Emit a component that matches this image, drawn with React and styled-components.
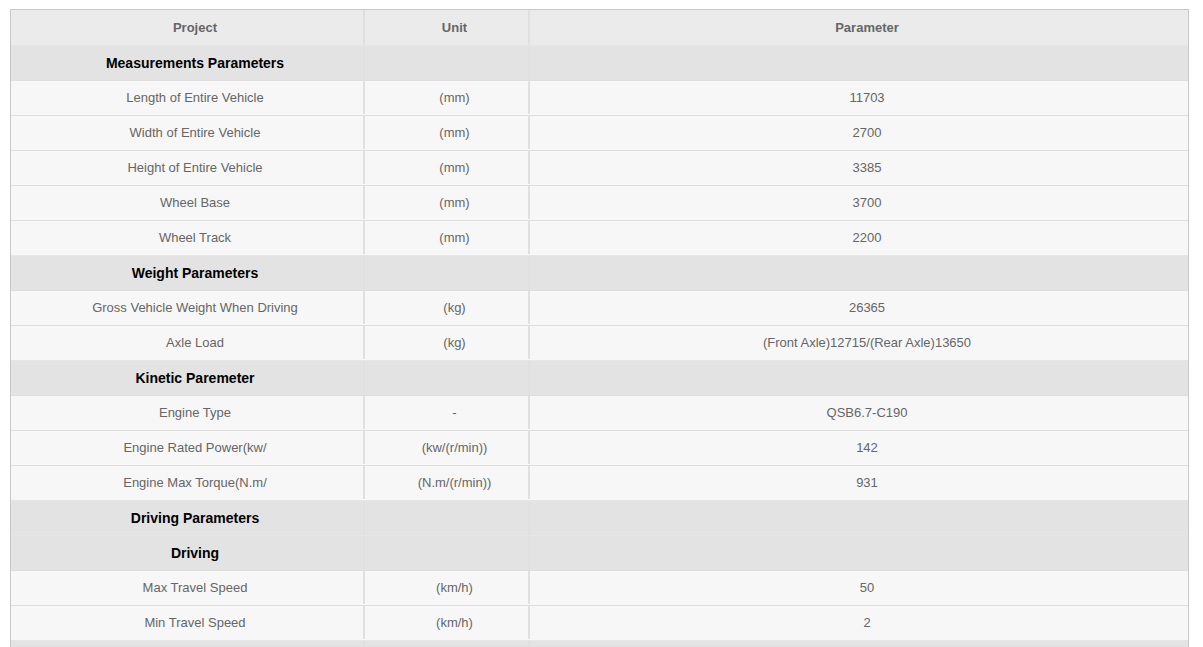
import React from "react";
import styled, { createGlobalStyle, css } from "styled-components";

const GlobalStyle = createGlobalStyle`
  html, body {
    margin: 0;
    padding: 0;
    background: #fff;
    overflow: hidden;
  }
  body {
    font-family: Arial, "Liberation Sans", sans-serif;
    font-size: 13px;
  }
`;

const rows = [
  { kind: "section", cells: ["Measurements Parameters", "", ""] },
  { cells: ["Length of Entire Vehicle", "(mm)", "11703"] },
  { cells: ["Width of Entire Vehicle", "(mm)", "2700"] },
  { cells: ["Height of Entire Vehicle", "(mm)", "3385"] },
  { cells: ["Wheel Base", "(mm)", "3700"] },
  { cells: ["Wheel Track", "(mm)", "2200"] },
  { kind: "section", cells: ["Weight Parameters", "", ""] },
  { cells: ["Gross Vehicle Weight When Driving", "(kg)", "26365"] },
  { cells: ["Axle Load", "(kg)", "(Front Axle)12715/(Rear Axle)13650"] },
  { kind: "section", cells: ["Kinetic Paremeter", "", ""] },
  { cells: ["Engine Type", "-", "QSB6.7-C190"] },
  { cells: ["Engine Rated Power(kw/", "(kw/(r/min))", "142"] },
  { cells: ["Engine Max Torque(N.m/", "(N.m/(r/min))", "931"] },
  { kind: "section", cells: ["Driving Parameters", "", ""] },
  { kind: "section", cells: ["Driving", "", ""] },
  { cells: ["Max Travel Speed", "(km/h)", "50"] },
  { cells: ["Min Travel Speed", "(km/h)", "2"] },
  { kind: "section", cells: ["", "", ""] },
];

const App = () => (
  <>
    <GlobalStyle />
    <Page>
      <Table>
        <Row kind="head">
          <Cell>Project</Cell>
          <Cell>Unit</Cell>
          <Cell last>Parameter</Cell>
        </Row>
        {rows.map((row, i) => (
          <Row key={i} kind={row.kind || "data"}>
            {row.cells.map((text, j) => (
              <Cell key={j} last={j === 2}>
                {text}
              </Cell>
            ))}
          </Row>
        ))}
      </Table>
    </Page>
  </>
);

export default App;

const Page = styled.div`
  padding: 9px 0 0 10px;
`;

const Table = styled.div`
  width: 1177px;
  border: 1px solid #c8c8c8;
  border-bottom: none;
`;

const rowKinds = {
  head: css`
    background: #ebebeb;
    color: #666;
    font-weight: bold;
  `,
  section: css`
    background: #e3e3e3;
    color: #000;
    font-size: 14px;
    font-weight: bold;
    border-top: 1px solid #e6e6e6;
  `,
  data: css`
    background: #f7f7f7;
    color: #666;
    border-top: 1px solid #dedede;
    padding-bottom: 1px;
  `,
};

const Row = styled.div`
  display: grid;
  grid-template-columns: 354px 165px 658px;
  height: 35px;
  box-sizing: border-box;
  ${(props) => rowKinds[props.kind]}
`;

const Cell = styled.div`
  display: flex;
  align-items: center;
  justify-content: center;
  box-sizing: border-box;
  padding-left: 16px;
  border-right: ${(props) => (props.last ? "none" : "2px solid #e0e0e0")};
  white-space: nowrap;
`;
